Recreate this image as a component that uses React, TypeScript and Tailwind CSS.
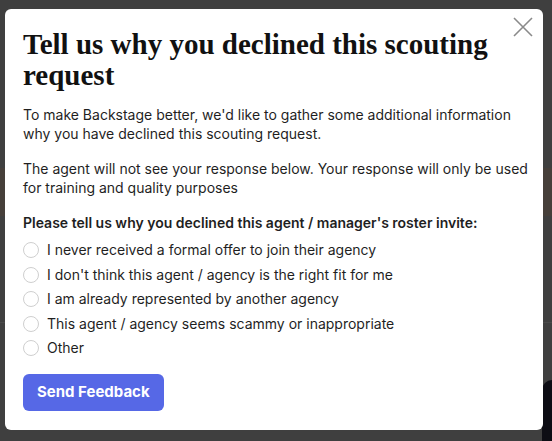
const reasons = [
  "I never received a formal offer to join their agency",
  "I don't think this agent / agency is the right fit for me",
  "I am already represented by another agency",
  "This agent / agency seems scammy or inappropriate",
  "Other",
];

export default function App() {
  return (
    <div className="relative h-[441px] w-[552px] overflow-hidden bg-[#3f3f3f]">
      {/* faint page behind the overlay */}
      <div className="absolute left-0 top-[168px] h-[48px] w-full bg-[#463f3a]" />
      <div className="absolute left-0 top-[322px] h-px w-full bg-[#4a4a4a]" />
      <div className="absolute right-0 top-[380px] h-[70px] w-[10px] rounded-l-full bg-[#0d0d14]" />

      <div className="absolute left-[5px] top-[9px] flex h-[421px] w-[538px] flex-col rounded-md bg-white pl-[18px] pr-[10px] pt-[20px] font-['Inter','Liberation_Sans',sans-serif] text-[#1f1f1f]">
        <button className="absolute right-[10px] top-[8px] p-0 text-[#8a8a8a]">
          <svg width="20" height="20" viewBox="0 0 20 20" fill="none" stroke="currentColor" strokeWidth="1.6">
            <path d="M1 1 L19 19 M19 1 L1 19" />
          </svg>
        </button>

        <h1 className="pr-6 font-['Liberation_Serif','DejaVu_Serif',serif] text-[29px] font-bold leading-[31px] text-[#111]">
          Tell us why you declined this scouting request
        </h1>

        <p className="mt-[15px] text-[14px] leading-[18.5px]">
          To make Backstage better, we'd like to gather some additional information why you have declined this scouting request.
        </p>
        <p className="mt-[17px] text-[14px] leading-[18.5px]">
          The agent will not see your response below. Your response will only be used for training and quality purposes
        </p>

        <p className="mt-[17px] text-[14px] font-semibold leading-[18px]">
          Please tell us why you declined this agent / manager's roster invite:
        </p>

        <div className="mt-[9px] flex flex-col gap-[6.5px]">
          {reasons.map((r) => (
            <label key={r} className="flex items-center gap-[8px] text-[14px] leading-[18px]">
              <span className="h-[16px] w-[16px] shrink-0 rounded-full border border-[#cfcfcf] bg-white" />
              <span>{r}</span>
            </label>
          ))}
        </div>

        <div className="mt-[17px]">
          <button className="h-[37px] rounded-md bg-[#5668e6] px-[14px] text-[15px] font-bold text-white">
            Send Feedback
          </button>
        </div>
      </div>
    </div>
  );
}
